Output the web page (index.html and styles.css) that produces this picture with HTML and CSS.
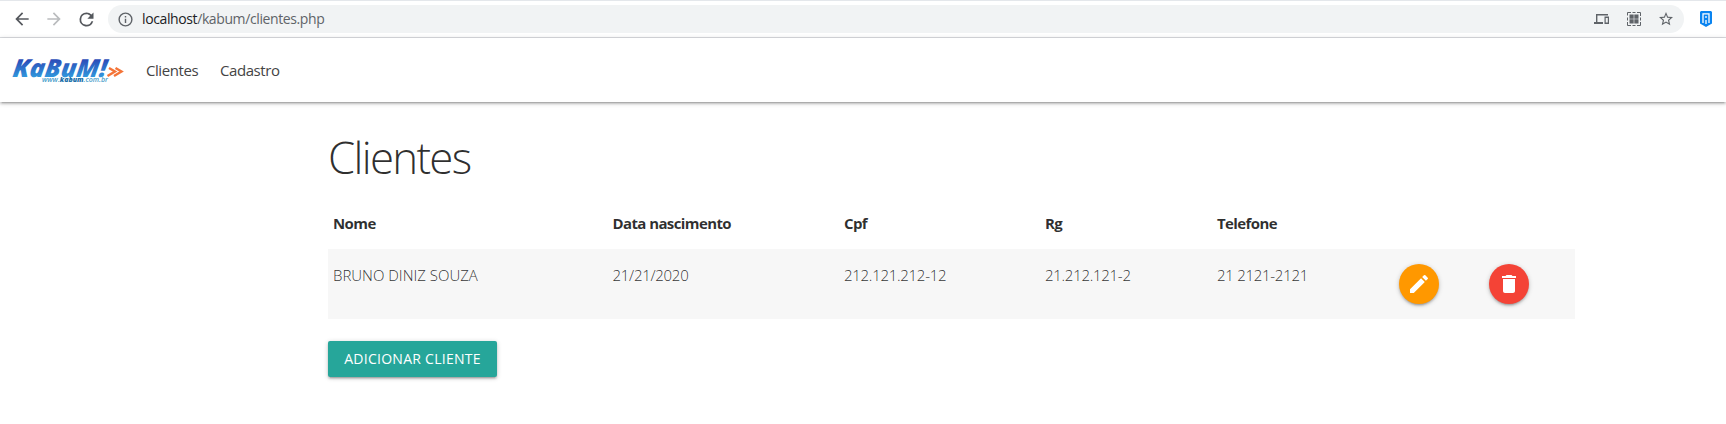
FILE: index.html
```html
<!DOCTYPE html>
<html lang="pt-br">
<head>
<meta charset="utf-8">
<title>Clientes</title>
<link rel="stylesheet" href="styles.css">
</head>
<body>
<div class="toolbar">
  <svg class="tool back" viewBox="0 0 24 24"><path d="M20 11H7.8l5.6-5.6L12 4l-8 8 8 8 1.4-1.4L7.8 13H20z"/></svg>
  <svg class="tool forward" viewBox="0 0 24 24"><path d="M4 11h12.2l-5.6-5.6L12 4l8 8-8 8-1.4-1.4 5.6-5.6H4z"/></svg>
  <svg class="tool reload" viewBox="0 0 24 24"><path d="M17.65 6.35A7.96 7.96 0 0 0 12 4a8 8 0 1 0 7.73 10h-2.08A6 6 0 1 1 12 6c1.66 0 3.14.69 4.22 1.78L13 11h7V4z"/></svg>
  <div class="omnibox">
    <svg class="info" viewBox="0 0 24 24"><path d="M11 7h2v2h-2zm0 4h2v6h-2zm1-9a10 10 0 1 0 0 20 10 10 0 0 0 0-20zm0 18a8 8 0 1 1 0-16 8 8 0 0 1 0 16z"/></svg>
    <span class="url"><span class="host">localhost</span>/kabum/clientes.php</span>
    <svg class="act devices" viewBox="0 0 16 16"><path d="M2 3h12v1.4H3.4V11H9v2H0v-2h2zM10.500 5.500h4.500v7.500h-4.500zM11.700 7v4.500h2.100V7z" fill-rule="evenodd"/></svg>
    <svg class="act qr" viewBox="0 0 16 16"><path d="M1.500 4.500V1.500H5M11 1.500h3.500V5M14.500 11v3.500H11M5 14.500H1.500V11M6.500 1.500h3M6.500 14.500h3M1.500 6.500v3M14.500 6.500v3" fill="none" stroke="currentColor"/><path d="M3.500 3.500h4.200v4.200H3.500zM8.300 3.500h4.200v4.200H8.300zM3.500 8.300h4.200v4.200H3.500zM8.300 8.300h4.200v4.200H8.300z"/></svg>
    <svg class="act star" viewBox="2 2 20 20"><path d="M22 9.240l-7.190-.62L12 2 9.190 8.630 2 9.240l5.460 4.730L5.820 21 12 17.270 18.180 21l-1.630-7.030L22 9.240zM12 15.400l-3.760 2.270 1-4.280-3.320-2.880 4.380-.38L12 6.100l1.710 4.040 4.380.38-3.320 2.880 1 4.280L12 15.400z"/></svg>
  </div>
  <svg class="shield" viewBox="0 0 12 16"><path d="M1 0h10l1 1v11.500L6 16l-6-3.500V1z" fill="#0a84f0"/><path d="M3 12V2.800h6V12M6 5v2M6 9v4" fill="none" stroke="#fff" stroke-width="1.300"/></svg>
</div>
<nav class="navbar">
  <svg class="logo" viewBox="0 0 112 30">
    <defs><linearGradient id="blue" x1="0" y1="0" x2="0" y2="1"><stop offset=".3" stop-color="#2c4fb9"/><stop offset=".8" stop-color="#3197dc"/></linearGradient></defs>
    <text class="brand" transform="translate(0 21.500) skewX(-8) scale(1.190 1)" fill="url(#blue)" textLength="79" lengthAdjust="spacingAndGlyphs">KaBuM!</text>
    <path d="M97 13l6 3.500-7.500 4.500M103.500 13l6 3.500-7.500 4.500" fill="none" stroke="#f47438" stroke-width="2.400"/>
    <text class="site" x="30" y="27" textLength="66" lengthAdjust="spacingAndGlyphs">www.<tspan class="site-name">kabum</tspan>.com.br</text>
  </svg>
  <a class="link clientes">Clientes</a>
  <a class="link cadastro">Cadastro</a>
</nav>
<main class="container">
  <h1>Clientes</h1>
  <table>
    <colgroup><col class="c1"><col class="c2"><col class="c3"><col class="c4"><col class="c5"><col class="c6"><col class="c7"></colgroup>
    <thead><tr><th>Nome</th><th>Data nascimento</th><th>Cpf</th><th>Rg</th><th>Telefone</th><th></th><th></th></tr></thead>
    <tbody><tr>
      <td class="name">BRUNO DINIZ SOUZA</td><td>21/21/2020</td><td>212.121.212-12</td><td>21.212.121-2</td><td>21 2121-2121</td>
      <td><a class="round edit"><svg viewBox="0 0 24 24"><path d="M3 17.250V21h3.750L17.810 9.940l-3.750-3.750L3 17.250zM20.710 7.040a1 1 0 0 0 0-1.410l-2.340-2.340a1 1 0 0 0-1.410 0l-1.830 1.830 3.750 3.750 1.830-1.830z"/></svg></a></td>
      <td><a class="round remove"><svg viewBox="0 0 24 24"><path d="M6 19c0 1.100.9 2 2 2h8c1.100 0 2-.9 2-2V7H6v12zM19 4h-3.500l-1-1h-5l-1 1H5v2h14V4z"/></svg></a></td>
    </tr></tbody>
  </table>
  <a class="add">ADICIONAR CLIENTE</a>
</main>
</body>
</html>
```
FILE: styles.css
```css
* { box-sizing: border-box; }
body {
  margin: 0;
  height: 424px;
  overflow: hidden;
  background: #fff;
  color: rgba(0, 0, 0, 0.82);
  font: 15px/22.5px "Segoe UI", "Open Sans", "Noto Sans", sans-serif;
}
.toolbar {
  display: flex;
  align-items: center;
  height: 38px;
  padding: 0 14px 0 12px;
  border-top: 1px solid #e4e7eb;
  border-bottom: 1px solid #dadce0;
}
.tool { width: 20px; height: 20px; margin-right: 12px; fill: #55585d; }
.forward { fill: #babcbe; }
.reload { width: 21px; height: 21px; margin-right: 11px; }
.omnibox {
  display: flex;
  flex: 1;
  align-items: center;
  height: 28px;
  padding: 0 11px 0 9px;
  border-radius: 14px;
  background: #f1f3f4;
  color: #5f6368;
}
.info { width: 17px; height: 17px; margin-right: 8px; fill: #5f6368; }
.url { flex: 1; font-size: 14px; letter-spacing: -0.39px; }
.host { color: #202124; }
.act { width: 16px; height: 16px; margin-left: 16px; fill: #5f6368; }
.star { width: 14px; height: 14px; margin-left: 17px; }
.shield { width: 12px; height: 16px; margin-left: 16px; }
.navbar {
  position: relative;
  display: flex;
  align-items: center;
  height: 64px;
  padding-left: 12px;
  background: #fff;
  box-shadow: 0 2px 2px 0 rgba(0, 0, 0, 0.14), 0 3px 1px -2px rgba(0, 0, 0, 0.12), 0 1px 5px 0 rgba(0, 0, 0, 0.2);
}
.logo { width: 112px; height: 30px; margin-right: 22px; overflow: visible; }
.brand { font: italic 800 25px "Open Sans", sans-serif; }
.site { font: italic 600 7px "Open Sans", sans-serif; fill: #4aa0cb; }
.site-name { font-weight: 800; fill: #1a6fa9; }
.link { color: #444; font-size: 15px; letter-spacing: -0.43px; }
.clientes { width: 52px; margin-right: 22px; }
.container { width: 1247px; margin-left: 328px; }
h1 {
  margin: 31px 0 21px;
  font-size: 43.800px;
  line-height: 48px;
  font-weight: 300;
  letter-spacing: -1.700px;
}
table { width: 1247px; border-collapse: collapse; table-layout: fixed; }
.c1 { width: 279.500px; }
.c2 { width: 231.500px; }
.c3 { width: 201px; }
.c4 { width: 172px; }
.c5 { width: 182px; }
.c6 { width: 90px; }
.c7 { width: 91px; }
th { height: 47px; padding: 0 5px 5px; text-align: left; font-weight: 700; letter-spacing: -0.6px; }
td { height: 70px; padding: 15px 5px; vertical-align: top; font-weight: 300; letter-spacing: -0.280px; }
.name { letter-spacing: 0; }
tbody tr { background: #f7f7f7; }
.round {
  display: flex;
  align-items: center;
  justify-content: center;
  width: 40px;
  height: 40px;
  border-radius: 50%;
  box-shadow: 0 2px 2px 0 rgba(0, 0, 0, 0.14), 0 3px 1px -2px rgba(0, 0, 0, 0.12), 0 1px 5px 0 rgba(0, 0, 0, 0.2);
}
.round svg { width: 24px; height: 24px; fill: #fff; }
.edit { background: #ff9800; }
.remove { background: #f44336; }
.add {
  display: inline-block;
  width: 169px;
  height: 36px;
  margin-top: 22px;
  border-radius: 2px;
  background: #26a69a;
  color: #fff;
  font-size: 14px;
  line-height: 36px;
  text-align: center;
  letter-spacing: 0.26px;
  box-shadow: 0 2px 2px 0 rgba(0, 0, 0, 0.14), 0 3px 1px -2px rgba(0, 0, 0, 0.12), 0 1px 5px 0 rgba(0, 0, 0, 0.2);
}
```
